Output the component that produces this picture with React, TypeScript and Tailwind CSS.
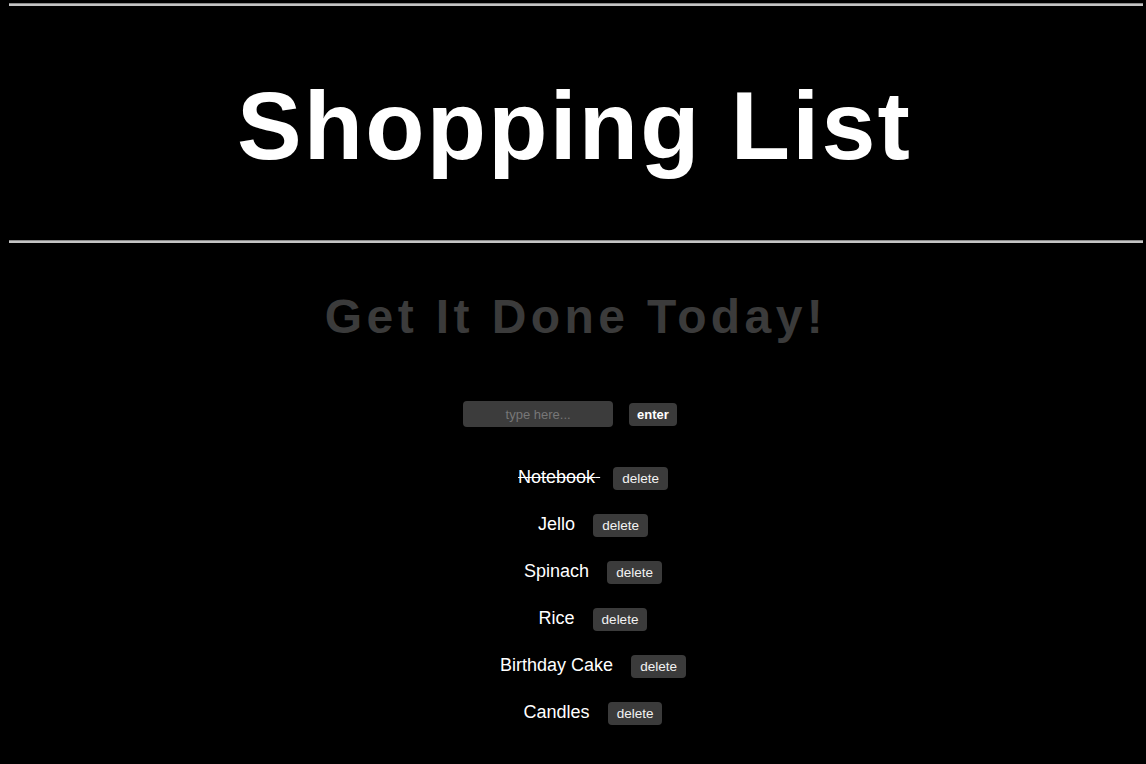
import React from "react";

const items = [
  { name: "Notebook", done: true },
  { name: "Jello", done: false },
  { name: "Spinach", done: false },
  { name: "Rice", done: false },
  { name: "Birthday Cake", done: false },
  { name: "Candles", done: false },
];

const Rule = () => (
  <div className="ml-[9px] mr-[3px] h-[3px] border-t-[1px] border-b-[2px] border-t-[#8a8a8a] border-b-[#c4c4c4]" />
);

const App = () => {
  return (
    <div className="min-h-[764px] bg-black text-white font-['Liberation_Sans',Arial,sans-serif] pt-[3px]">
      <Rule />

      <div className="h-[234px] pt-[71px]">
        <h1 className="text-center text-[97px] leading-none font-bold tracking-[2.2px] pl-[3px]">Shopping List</h1>
      </div>

      <Rule />

      <div className="px-2">
        <h2 className="mt-[50px] text-center text-[48px] leading-none font-bold tracking-[4.4px] pl-[6px] text-[#3b3b3b]">
          Get It Done Today!
        </h2>

        <div className="mt-[60px] flex items-center justify-center gap-[16px] pr-[6px]">
          <input
            type="text"
            placeholder="type here..."
            className="w-[150px] h-[26px] rounded-[4px] bg-[#3c3c3c] text-center text-[13px] text-white placeholder:text-[#777777] outline-none"
          />
          <button className="h-[23px] px-[8px] rounded-[4px] bg-[#3b3b3b] text-[13px] font-bold text-white leading-[23px]">
            enter
          </button>
        </div>

        <ul className="mt-[27px] pl-10">
          {items.map((item) => (
            <li key={item.name} className="h-[47px] text-center text-[18px] leading-[47px]">
              <span className={item.done ? "line-through" : ""}>{item.name}{"\u00a0"}</span>
              <button className="ml-[13px] inline-block h-[23px] px-[9px] rounded-[4px] bg-[#3b3b3b] text-[13.5px] leading-[23px] text-[#f2f2f2]">
                delete
              </button>
            </li>
          ))}
        </ul>
      </div>
    </div>
  );
};

export default App;
